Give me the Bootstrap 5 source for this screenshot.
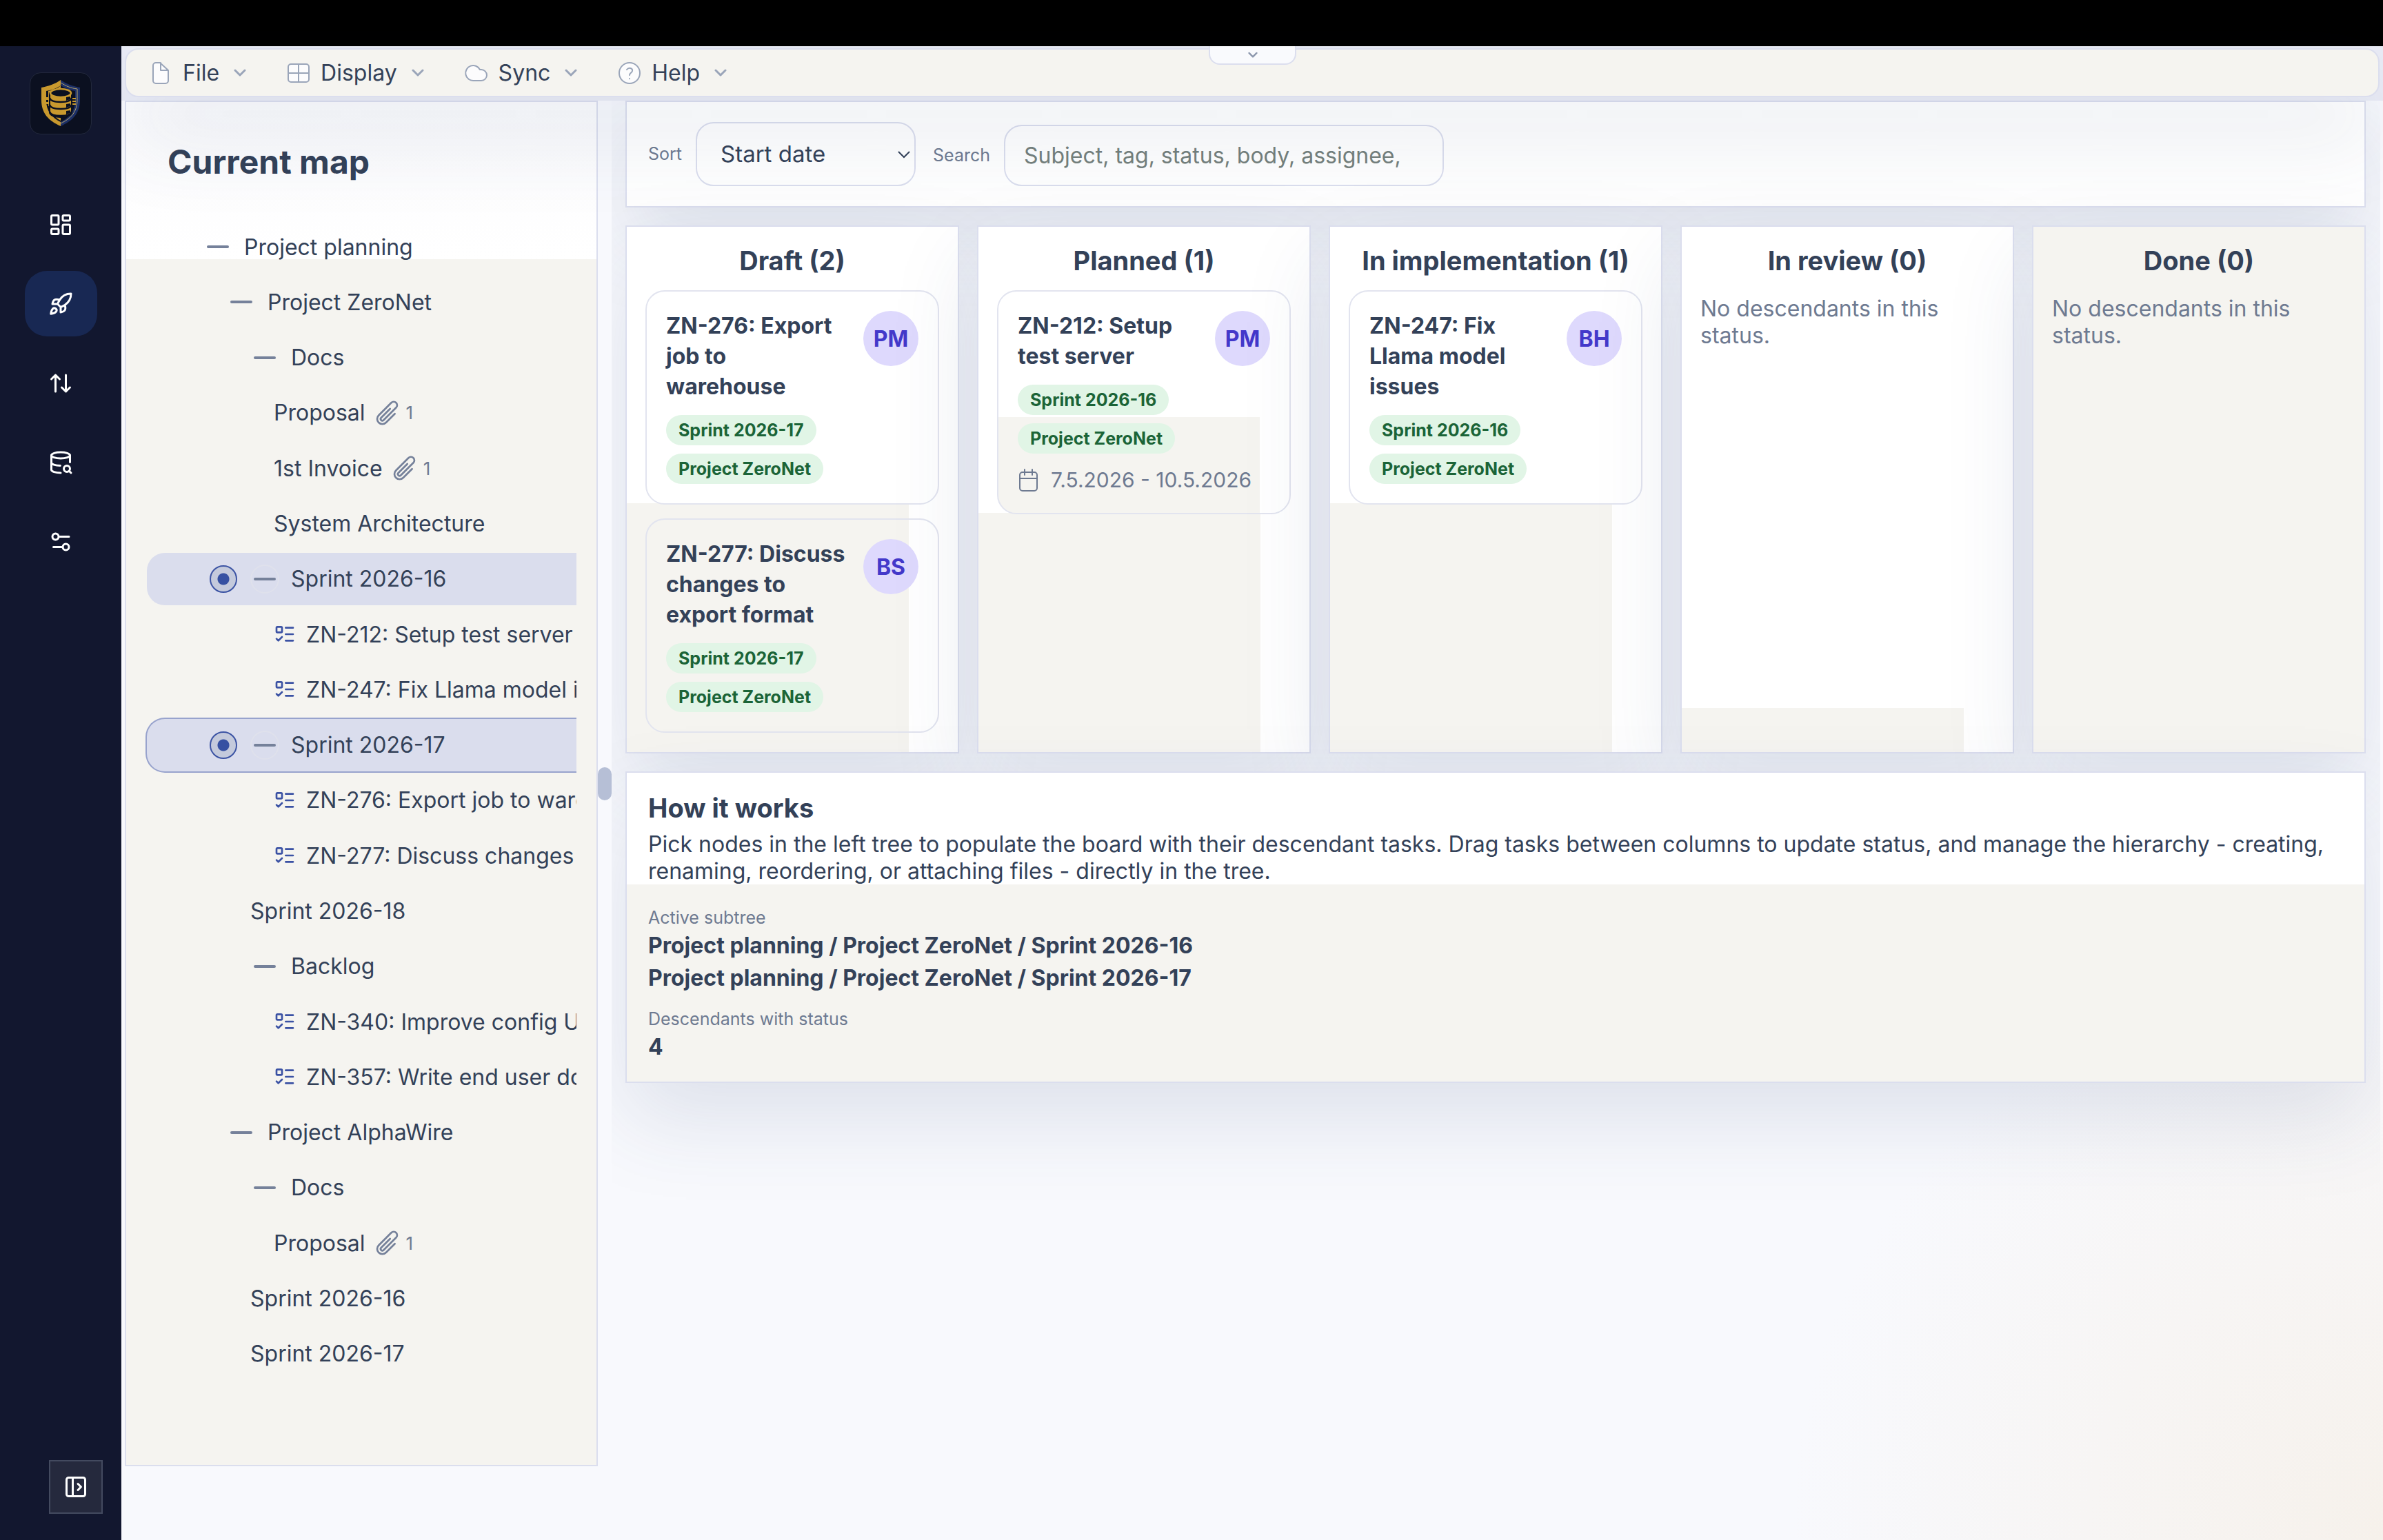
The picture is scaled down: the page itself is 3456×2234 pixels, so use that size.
<!DOCTYPE html>
<html lang="en">
<head>
<meta charset="utf-8">
<meta name="viewport" content="width=device-width, initial-scale=1">
<title>Current map</title>
<link href="https://cdn.jsdelivr.net/npm/bootstrap@5.3.0/dist/css/bootstrap.min.css" rel="stylesheet">
<style>
:root{--ink:#334158;--muted-ink:#6e7a91;--line:#dbdeee;--paper:#f5f4f0;--navy:#12172f}
body{font-family:Inter,"Liberation Sans",sans-serif;font-size:32px;line-height:39px;color:var(--ink);
  background:radial-gradient(circle at 100% 100%,#f6f1eb 0,#f8f9fd 860px) #f8f9fd;min-height:100vh}
svg{display:block;fill:none;stroke:currentColor;stroke-width:2;stroke-linecap:round;stroke-linejoin:round;flex:none}
.ic{width:36px;height:36px}
.notch{height:67px;background:#000;flex:none}

.side-rail{width:176px;background:var(--navy);color:#fff;z-index:3}
.brand{width:90px;height:90px;margin:38px 0 83px;border-radius:16px;background:#0b1020;border:1px solid #22283c}
.brand svg{width:66px;height:70px;stroke:none}
.rail-list{gap:20px}
.rail-link{width:105px;height:95px;border-radius:32px;color:#fff}
.rail-link.active{background:#182853}
.expand-btn{width:78px;height:78px;background:#25293d;border:2px solid #434a5f;color:#fff;margin:0 27px 38px 0}

.menu-wrap{padding:3px 5px 5px;background:#e9ebf5;z-index:2}
.menu-bar{height:71px;border:2px solid var(--line);border-radius:20px;background:var(--paper);padding-left:32px;gap:58px;
  box-shadow:0 60px 120px rgba(48,70,115,.12)}
.menu-btn{gap:14px;color:var(--ink);background:none;border:0;padding:0}
.menu-btn .ic{color:#9aa5b9;fill:#fcfcfd;stroke-width:2}
.chev{width:18px;height:18px;color:#9aa5b9;stroke-width:3}
.menu-btn .chev{margin-left:7px}
.pull-tab{position:absolute;top:0;left:1577px;width:127px;height:27px;border:2px solid var(--line);border-top:0;
  border-radius:0 0 16px 16px;background:#f9fafd;z-index:4}
.pull-tab svg{width:14px;height:14px;color:#8c97ad;stroke-width:3}

.map-panel{width:686px;margin-left:5px;border:2px solid var(--line);padding:60px 29px 121px 28px;margin-bottom:107px;
  background:linear-gradient(var(--paper),var(--paper)) 0 228px no-repeat,linear-gradient(#fbfbfd,#fff 228px)}
.map-title{font-size:48px;line-height:54px;font-weight:700;padding-left:32px;margin-bottom:56px}
.tree-row{flex:1 1 0;white-space:nowrap;border:2px solid transparent;border-width:2px 0 2px 2px;
  padding-left:calc(23px + 34px * var(--lvl,0))}
.lv1{--lvl:1}.lv2{--lvl:2}.lv3{--lvl:3}
.pick-slot{width:59px;flex:none}
.pick-slot input{appearance:none;width:40px;height:40px;margin:0;display:block;border:2px solid #3c54a4;border-radius:50%;
  background:radial-gradient(circle,#3651a2 0 8px,#c4cadc 9px)}
.twig{width:42px;height:42px;margin-right:17px;border:0;padding:0;background:none;border-radius:50%;flex:none}
.twig::before{content:"";width:32px;height:4px;border-radius:2px;background:#75819a}
.picked .twig{border:2px solid #dfe1ec}
.picked{background:#dadded;border-radius:28px 0 0 28px;background-clip:padding-box}
.picked.focused{border-color:#98a3cd;background-clip:border-box}
.clip-icon{width:40px;height:40px;margin-left:12px;color:#75819a}
.clip-count{font-size:26px;color:var(--muted-ink);margin-left:7px}
.todo{width:32px;height:32px;color:#3b52a4;stroke-width:2;margin-right:15px}

.splitter{width:20px;margin-bottom:107px}
.grip{width:20px;height:48px;border-radius:10px;background:#b6bfd6;margin-top:967px}

.board-area{margin-right:4px;padding:0 21px 0 20px;gap:26px;overflow:hidden}
.sheet{border:2px solid var(--line);background-color:#fff;background-repeat:no-repeat;background-position:0 100%;
  box-shadow:0 52px 120px rgba(48,70,115,.13)}
.filter-bar{min-height:154px;padding:29px 31px;gap:25px}
.filter-field{gap:20px}
.filter-bar label{font-size:25px;color:var(--muted-ink)}
.sort-box,.find-box{border:2px solid var(--line);border-radius:26px;background:transparent;color:var(--ink);outline:0}
.sort-box{width:319px;height:93px;padding:0 34px;appearance:none;font-size:33px;
  background:url("data:image/svg+xml,%3Csvg xmlns='http://www.w3.org/2000/svg' viewBox='0 0 18 18' fill='none' stroke='%23334158' stroke-width='2'%3E%3Cpath d='M1 5l8 8 8-8'/%3E%3C/svg%3E") right 6px center/18px no-repeat}
.find-box{width:638px;height:89px;padding:0 27px}
.find-box::placeholder{color:#75807c;opacity:1}

.lanes{display:grid;grid-template-columns:repeat(5,1fr);gap:26px}
.lane{min-height:766px;padding:26px 27px}
.lane h2{font-size:38px;line-height:46px;font-weight:700;text-align:center;margin:0 -20px 20px}
.wash{background-image:linear-gradient(var(--paper),var(--paper))}
.wash-draft,.wash-impl{background-size:409px 361px}
.wash-plan{background-size:409px 347px}
.wash-review{background-size:409px 64px}
.task{border:2px solid #e2e4ef;border-radius:28px;padding:28px;margin-bottom:20px}
.task-head{gap:20px}
.task-name{font-size:32px;line-height:44px;font-weight:700;margin:0}
.task-tags{margin-top:19px;gap:12px}
.wash-card{background:linear-gradient(var(--paper),var(--paper)) 0 100%/379px 139px no-repeat;border-bottom-left-radius:28px}
.face{width:80px;height:80px;border-radius:50%;background:#ded9fd;color:#4338ca;font-weight:700;flex:none}
.pill{height:44px;padding:0 18px;border-radius:22px;background:#e1f5e6;color:#1b6437;font-size:25px;font-weight:700}
.when{margin-top:19px;gap:16px;color:var(--muted-ink);font-size:30px}
.when svg{width:32px;height:36px}
.none-here{color:var(--muted-ink);padding-top:7px;margin:0}

.how{padding:27px 31px;background-size:100% 286px}
.how h2{font-size:38px;line-height:48px;font-weight:700;margin:0 0 9px}
.facts{padding-top:12px;margin:0}
.facts dt{font-size:25px;line-height:34px;font-weight:400;color:var(--muted-ink);padding-top:19px}
.facts dd{font-weight:700;line-height:47px;margin:0}
</style>
</head>
<body class="d-flex flex-column">
<svg width="0" height="0" class="position-absolute" aria-hidden="true">
  <symbol id="down" viewBox="0 0 18 18"><path d="M2 5l7 7 7-7"/></symbol>
  <symbol id="clip" viewBox="0 0 24 24"><path d="m18.375 12.739-7.693 7.693a4.5 4.5 0 0 1-6.364-6.364l10.94-10.94A3 3 0 1 1 19.5 7.372L8.552 18.32m.009-.01-.01.01m5.699-9.941-7.81 7.81a1.5 1.5 0 0 0 2.112 2.13" stroke-width="1.6"/></symbol>
  <symbol id="todo" viewBox="0 0 24 24"><rect x="3" y="4" width="6" height="6" rx="1"/><path d="m3 17 2 2 4-4M13 5h8M13 12h8M13 19h8"/></symbol>
</svg>
<div class="notch"></div>
<div class="d-flex flex-grow-1">
  <nav class="side-rail d-flex flex-column align-items-center flex-shrink-0" aria-label="Main">
    <a href="#" class="brand d-flex align-items-center justify-content-center" aria-label="Home">
      <svg viewBox="0 0 66 70">
        <path fill="#c9992e" d="M33 1v8C26 14 19 16 12 17v14c0 14 8 25 21 31v6C15 60 5 49 5 30V12C15 10 25 7 33 1z"/>
        <path fill="#1c2f66" d="M33 1c8 6 18 9 28 11v18c0 19-10 30-28 38v-6c13-6 21-17 21-31V17C47 16 40 14 33 9z"/>
        <path fill="none" stroke="#b7a56a" stroke-width="1" d="M33 5c8 5 15 8 24 9v16c0 17-9 27-24 34"/>
        <path fill="#c9992e" d="M33 9v5C29 17 24 18 19 19v25l-4-6V17C22 16 28 14 33 9zM20 48l13 5v7c-6-3-10-7-13-12zM12 26h6v4h-6zM12 33h6v3h-6zM50 27h5v2h-5zM50 31h5v2h-5zM50 35h5v2h-5z"/>
        <path fill="#c9992e" stroke="#0b1020" stroke-width="2" d="M17 20v28c0 4 7 7 16 7s16-3 16-7V20z"/>
        <ellipse cx="33" cy="20" rx="15" ry="6" fill="#0b1020" stroke="#c9992e" stroke-width="2.5"/>
        <path fill="none" stroke="#0b1020" stroke-width="2.5" d="M17 27c1 4 8 6 16 6s15-2 16-6M17 37c1 4 8 6 16 6s15-2 16-6M17 47c1 4 8 6 16 6s15-2 16-6"/>
        <path fill="#0b1020" d="M41 26l6-1v4l-6 2zM41 36l6-1v4l-6 2zM41 46l6-1v4l-6 2z"/>
      </svg>
    </a>
    <div class="rail-list d-flex flex-column align-items-center">
      <a href="#" class="rail-link d-flex align-items-center justify-content-center" aria-label="Dashboard"><svg class="ic" viewBox="0 0 24 24"><rect x="3" y="3" width="7" height="9" rx="1"/><rect x="14" y="3" width="7" height="5" rx="1"/><rect x="14" y="12" width="7" height="9" rx="1"/><rect x="3" y="16" width="7" height="5" rx="1"/></svg></a>
      <a href="#" class="rail-link active d-flex align-items-center justify-content-center" aria-label="Projects"><svg class="ic" viewBox="0 0 24 24"><path d="M4.5 16.5c-1.5 1.26-2 5-2 5s3.74-.5 5-2c.71-.84.7-2.13-.09-2.91a2.18 2.18 0 0 0-2.91-.09zM12 15l-3-3a22 22 0 0 1 2-3.95A12.88 12.88 0 0 1 22 2c0 2.72-.78 7.5-6 11a22.35 22.35 0 0 1-4 2zM9 12H4s.55-3.03 2-4c1.62-1.08 5 0 5 0M12 15v5s3.03-.55 4-2c1.08-1.62 0-5 0-5"/></svg></a>
      <a href="#" class="rail-link d-flex align-items-center justify-content-center" aria-label="Transfer"><svg class="ic" viewBox="0 0 24 24"><path d="m3 8 4-4 4 4M7 4v16M21 16l-4 4-4-4M17 20V4"/></svg></a>
      <a href="#" class="rail-link d-flex align-items-center justify-content-center" aria-label="Data search"><svg class="ic" viewBox="0 0 24 24"><ellipse cx="12" cy="5" rx="9" ry="3"/><path d="M21 11.7V5M3 5v14a9 3 0 0 0 9 3M3 12a9 3 0 0 0 8.6 3M22 22l-1.9-1.9"/><circle cx="18" cy="18" r="3"/></svg></a>
      <a href="#" class="rail-link d-flex align-items-center justify-content-center" aria-label="Settings"><svg class="ic" viewBox="0 0 24 24"><path d="M20 7h-9M14 17H5"/><circle cx="17" cy="17" r="3"/><circle cx="7" cy="7" r="3"/></svg></a>
    </div>
    <button type="button" class="expand-btn d-flex align-items-center justify-content-center mt-auto align-self-end" aria-label="Expand sidebar"><svg class="ic" viewBox="0 0 24 24"><rect x="3" y="3" width="18" height="18" rx="2"/><path d="M9 3v18M14 9l3 3-3 3"/></svg></button>
  </nav>

  <div class="d-flex flex-column flex-grow-1 position-relative" style="min-width:0">
    <button type="button" class="pull-tab d-flex align-items-center justify-content-center p-0" aria-label="Show header"><svg><use href="#down"/></svg></button>
    <div class="menu-wrap position-relative">
      <div class="menu-bar d-flex align-items-center">
        <button type="button" class="menu-btn d-flex align-items-center"><svg class="ic" viewBox="0 0 36 36"><path d="M17 3H11a4 4 0 0 0-4 4v22a4 4 0 0 0 4 4h14a4 4 0 0 0 4-4V14zM18 3v11h11"/></svg>File<svg class="chev"><use href="#down"/></svg></button>
        <button type="button" class="menu-btn d-flex align-items-center"><svg class="ic" viewBox="0 0 36 36"><rect x="3" y="5" width="30" height="26" rx="4"/><path d="M18 5v26M3 18h30"/></svg>Display<svg class="chev"><use href="#down"/></svg></button>
        <button type="button" class="menu-btn d-flex align-items-center"><svg class="ic" viewBox="0 0 36 36"><path d="M14 29a11 11 0 1 1 9-16h2a8 8 0 0 1 0 16z"/></svg>Sync<svg class="chev"><use href="#down"/></svg></button>
        <button type="button" class="menu-btn d-flex align-items-center"><svg class="ic" viewBox="0 0 36 36"><circle cx="18" cy="18" r="15"/><path d="M14 13c3-4 9-2 8 2-1 3-4 3-4 6M18 26v.2"/></svg>Help<svg class="chev"><use href="#down"/></svg></button>
      </div>
    </div>

    <div class="d-flex flex-grow-1">
      <aside class="map-panel d-flex flex-column flex-shrink-0">
        <h1 class="map-title">Current map</h1>
        <div class="d-flex flex-column flex-grow-1 overflow-hidden">
          <div class="tree-row d-flex align-items-center"><span class="pick-slot"></span><button class="twig d-flex align-items-center justify-content-center" aria-label="Collapse"></button>Project planning</div>
          <div class="tree-row lv1 d-flex align-items-center"><span class="pick-slot"></span><button class="twig d-flex align-items-center justify-content-center" aria-label="Collapse"></button>Project ZeroNet</div>
          <div class="tree-row lv2 d-flex align-items-center"><span class="pick-slot"></span><button class="twig d-flex align-items-center justify-content-center" aria-label="Collapse"></button>Docs</div>
          <div class="tree-row lv3 d-flex align-items-center"><span class="pick-slot"></span>Proposal<svg class="clip-icon"><use href="#clip"/></svg><span class="clip-count">1</span></div>
          <div class="tree-row lv3 d-flex align-items-center"><span class="pick-slot"></span>1st Invoice<svg class="clip-icon"><use href="#clip"/></svg><span class="clip-count">1</span></div>
          <div class="tree-row lv3 d-flex align-items-center"><span class="pick-slot"></span>System Architecture</div>
          <div class="tree-row lv2 picked d-flex align-items-center"><span class="pick-slot"><input type="checkbox" checked aria-label="Sprint 2026-16"></span><button class="twig d-flex align-items-center justify-content-center" aria-label="Collapse"></button>Sprint 2026-16</div>
          <div class="tree-row lv3 d-flex align-items-center"><span class="pick-slot"></span><svg class="todo"><use href="#todo"/></svg>ZN-212: Setup test server</div>
          <div class="tree-row lv3 d-flex align-items-center"><span class="pick-slot"></span><svg class="todo"><use href="#todo"/></svg>ZN-247: Fix Llama model issues</div>
          <div class="tree-row lv2 picked focused d-flex align-items-center"><span class="pick-slot"><input type="checkbox" checked aria-label="Sprint 2026-17"></span><button class="twig d-flex align-items-center justify-content-center" aria-label="Collapse"></button>Sprint 2026-17</div>
          <div class="tree-row lv3 d-flex align-items-center"><span class="pick-slot"></span><svg class="todo"><use href="#todo"/></svg>ZN-276: Export job to warehouse</div>
          <div class="tree-row lv3 d-flex align-items-center"><span class="pick-slot"></span><svg class="todo"><use href="#todo"/></svg>ZN-277: Discuss changes</div>
          <div class="tree-row lv2 d-flex align-items-center"><span class="pick-slot"></span>Sprint 2026-18</div>
          <div class="tree-row lv2 d-flex align-items-center"><span class="pick-slot"></span><button class="twig d-flex align-items-center justify-content-center" aria-label="Collapse"></button>Backlog</div>
          <div class="tree-row lv3 d-flex align-items-center"><span class="pick-slot"></span><svg class="todo"><use href="#todo"/></svg>ZN-340: Improve config UI</div>
          <div class="tree-row lv3 d-flex align-items-center"><span class="pick-slot"></span><svg class="todo"><use href="#todo"/></svg>ZN-357: Write end user docs</div>
          <div class="tree-row lv1 d-flex align-items-center"><span class="pick-slot"></span><button class="twig d-flex align-items-center justify-content-center" aria-label="Collapse"></button>Project AlphaWire</div>
          <div class="tree-row lv2 d-flex align-items-center"><span class="pick-slot"></span><button class="twig d-flex align-items-center justify-content-center" aria-label="Collapse"></button>Docs</div>
          <div class="tree-row lv3 d-flex align-items-center"><span class="pick-slot"></span>Proposal<svg class="clip-icon"><use href="#clip"/></svg><span class="clip-count">1</span></div>
          <div class="tree-row lv2 d-flex align-items-center"><span class="pick-slot"></span>Sprint 2026-16</div>
          <div class="tree-row lv2 d-flex align-items-center"><span class="pick-slot"></span>Sprint 2026-17</div>
        </div>
      </aside>
      <div class="splitter flex-shrink-0"><div class="grip"></div></div>

      <main class="board-area d-flex flex-column flex-grow-1">
        <form class="sheet filter-bar d-flex align-items-end">
          <div class="filter-field d-flex align-items-center"><label for="sort">Sort</label><select id="sort" class="sort-box"><option>Start date</option></select></div>
          <div class="filter-field d-flex align-items-center"><label for="find">Search</label><input id="find" type="search" class="find-box" placeholder="Subject, tag, status, body, assignee,"></div>
        </form>

        <div class="lanes">
          <section class="sheet lane wash wash-draft">
            <h2>Draft (2)</h2>
            <article class="task">
              <div class="task-head d-flex justify-content-between"><h3 class="task-name">ZN-276: Export job to warehouse</h3><span class="face d-flex align-items-center justify-content-center">PM</span></div>
              <div class="task-tags d-flex flex-column align-items-start"><span class="pill d-flex align-items-center">Sprint 2026-17</span><span class="pill d-flex align-items-center">Project ZeroNet</span></div>
            </article>
            <article class="task mb-0">
              <div class="task-head d-flex justify-content-between"><h3 class="task-name">ZN-277: Discuss changes to export format</h3><span class="face d-flex align-items-center justify-content-center">BS</span></div>
              <div class="task-tags d-flex flex-column align-items-start"><span class="pill d-flex align-items-center">Sprint 2026-17</span><span class="pill d-flex align-items-center">Project ZeroNet</span></div>
            </article>
          </section>
          <section class="sheet lane wash wash-plan">
            <h2>Planned (1)</h2>
            <article class="task wash-card">
              <div class="task-head d-flex justify-content-between"><h3 class="task-name">ZN-212: Setup test server</h3><span class="face d-flex align-items-center justify-content-center">PM</span></div>
              <div class="task-tags d-flex flex-column align-items-start"><span class="pill d-flex align-items-center">Sprint 2026-16</span><span class="pill d-flex align-items-center">Project ZeroNet</span></div>
              <div class="when d-flex align-items-center text-nowrap"><svg viewBox="0 0 32 36" stroke-width="2.5"><rect x="3" y="6" width="25" height="27" rx="4"/><path d="M3 15h25M10 2v8M21 2v8"/></svg>7.5.2026 - 10.5.2026</div>
            </article>
          </section>
          <section class="sheet lane wash wash-impl">
            <h2>In implementation (1)</h2>
            <article class="task">
              <div class="task-head d-flex justify-content-between"><h3 class="task-name">ZN-247: Fix Llama model issues</h3><span class="face d-flex align-items-center justify-content-center">BH</span></div>
              <div class="task-tags d-flex flex-column align-items-start"><span class="pill d-flex align-items-center">Sprint 2026-16</span><span class="pill d-flex align-items-center">Project ZeroNet</span></div>
            </article>
          </section>
          <section class="sheet lane wash wash-review">
            <h2>In review (0)</h2>
            <p class="none-here">No descendants in this status.</p>
          </section>
          <section class="sheet lane wash">
            <h2>Done (0)</h2>
            <p class="none-here">No descendants in this status.</p>
          </section>
        </div>

        <section class="sheet how wash">
          <h2>How it works</h2>
          <p class="mb-0">Pick nodes in the left tree to populate the board with their descendant tasks. Drag tasks between columns to update status, and manage the hierarchy - creating, renaming, reordering, or attaching files - directly in the tree.</p>
          <dl class="facts">
            <dt>Active subtree</dt>
            <dd>Project planning / Project ZeroNet / Sprint 2026-16</dd>
            <dd>Project planning / Project ZeroNet / Sprint 2026-17</dd>
            <dt>Descendants with status</dt>
            <dd>4</dd>
          </dl>
        </section>
      </main>
    </div>
  </div>
</div>
<script src="https://cdn.jsdelivr.net/npm/bootstrap@5.3.0/dist/js/bootstrap.bundle.min.js"></script>
</body>
</html>
